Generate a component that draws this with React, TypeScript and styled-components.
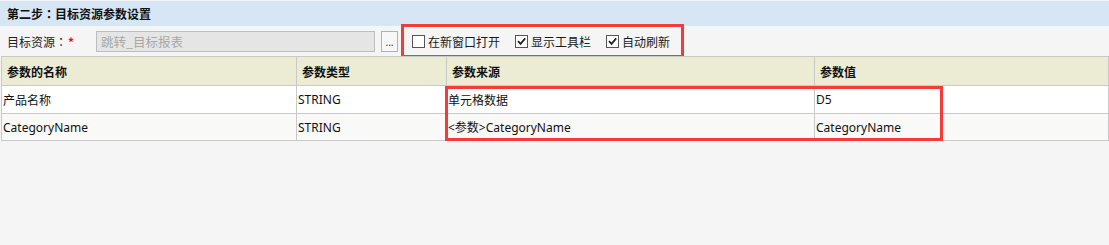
import React from "react";
import styled, { createGlobalStyle } from "styled-components";

const GlobalStyle = createGlobalStyle`
  html, body {
    margin: 0;
    padding: 0;
    background: #f5f5f5;
  }
  body {
    font-family: "Noto Sans", "Noto Sans CJK SC", sans-serif;
    font-size: 12px;
    color: #1a1a1a;
  }
`;

const Page = styled.div`
  width: 1109px;
  height: 245px;
  background: #f5f5f5;
  overflow: hidden;
  padding-top: 1px;
  box-sizing: border-box;
`;

const TitleBar = styled.div`
  height: 25px;
  background: #d6e6f5;
  display: flex;
  align-items: center;
  padding-left: 7px;
  font-weight: bold;
  font-family: "Noto Sans CJK SC", sans-serif;
  color: #111;
`;

const Colon = styled.span`
  font-family: "Noto Sans CJK TC", sans-serif;
`;

const FormRow = styled.div`
  height: 30px;
  display: flex;
  align-items: center;
  padding-left: 7px;
`;

const Label = styled.div`
  width: 89px;
  font-family: "Noto Sans CJK SC", sans-serif;
  color: #222;
  display: flex;
  align-items: center;
`;

const Required = styled.span`
  color: #ee1111;
  margin-left: 1px;
  font-weight: bold;
`;

const TextInput = styled.div`
  width: 279px;
  height: 21px;
  box-sizing: border-box;
  border: 1px solid #bdbdbd;
  background: #e5e5e5;
  color: #a8a8a8;
  padding-left: 4px;
  display: flex;
  align-items: center;
  font-family: "Noto Sans CJK SC", sans-serif;
  font-size: 12.5px;
`;

const BrowseButton = styled.div`
  margin-left: 6px;
  width: 17px;
  height: 21px;
  box-sizing: border-box;
  border: 1px solid #a9b3bd;
  background: #f7f7f7;
  display: flex;
  align-items: center;
  justify-content: center;
  font-size: 10px;
  color: #333;
  padding-top: 2px;
`;

const CheckGroup = styled.div`
  margin-left: 6px;
  width: 277px;
  height: 28px;
  box-sizing: border-box;
  outline: 3px solid #f53a3a;
  display: flex;
  align-items: center;
  padding-left: 8px;
  gap: 15px;
`;

const CheckItem = styled.label`
  display: flex;
  align-items: center;
  gap: 3px;
  font-family: "Noto Sans CJK SC", sans-serif;
  color: #1a1a1a;
`;

const Box = styled.span`
  width: 13px;
  height: 13px;
  box-sizing: border-box;
  border: 1px solid #555;
  background: #fff;
  display: flex;
  align-items: center;
  justify-content: center;
`;

const TableWrap = styled.div`
  position: relative;
  margin-left: 1px;
  width: 1108px;
`;

const Grid = styled.div`
  display: grid;
  grid-template-columns: 295px 150px 368px 293px;
  border: 1px solid #c9c9c9;
  border-bottom: none;
`;

const Cell = styled.div<{ $header?: boolean; $alt?: boolean; $last?: boolean; $h: number }>`
  height: ${(p) => p.$h}px;
  box-sizing: border-box;
  border-bottom: 1px solid #c9c9c9;
  border-right: ${(p) => (p.$last ? "none" : "1px solid #c9c9c9")};
  background: ${(p) => (p.$header ? "#ececd5" : p.$alt ? "#f9f9f7" : "#ffffff")};
  font-weight: ${(p) => (p.$header ? "bold" : "normal")};
  display: flex;
  align-items: ${(p) => (p.$header ? "flex-end" : "center")};
  padding: ${(p) => (p.$header ? "0 0 4px 5px" : "0 0 0 1px")};
  color: #111;
  white-space: nowrap;
`;

const Highlight = styled.div`
  position: absolute;
  left: 444px;
  top: 30px;
  width: 498px;
  height: 55px;
  box-sizing: border-box;
  border: 3px solid #f53a3a;
  pointer-events: none;
`;

const Check = ({ checked }: { checked: boolean }) => (
  <Box>
    {checked && (
      <svg width="11" height="11" viewBox="0 0 11 11">
        <path d="M2 5.2 L4.5 7.8 L9.2 2.4" fill="none" stroke="#222" strokeWidth="1.8" />
      </svg>
    )}
  </Box>
);

const headers = ["参数的名称", "参数类型", "参数来源", "参数值"];
const rows = [
  ["产品名称", "STRING", "单元格数据", "D5"],
  ["CategoryName", "STRING", "<参数>CategoryName", "CategoryName"],
];

export default function App() {
  return (
    <Page>
      <GlobalStyle />
      <TitleBar>
        第二步<Colon>：</Colon>目标资源参数设置
      </TitleBar>
      <FormRow>
        <Label>
          目标资源<Colon>：</Colon>
          <Required>*</Required>
        </Label>
        <TextInput>跳转_目标报表</TextInput>
        <BrowseButton>...</BrowseButton>
        <CheckGroup>
          <CheckItem>
            <Check checked={false} />
            在新窗口打开
          </CheckItem>
          <CheckItem>
            <Check checked />
            显示工具栏
          </CheckItem>
          <CheckItem>
            <Check checked />
            自动刷新
          </CheckItem>
        </CheckGroup>
      </FormRow>
      <TableWrap>
        <Grid>
          {headers.map((h, i) => (
            <Cell key={h} $header $h={29} $last={i === 3}>
              {h}
            </Cell>
          ))}
          {rows.map((r, ri) =>
            r.map((c, ci) => (
              <Cell key={`${ri}-${ci}`} $h={ri === 0 ? 28 : 27} $alt={ri === 1} $last={ci === 3}>
                {c}
              </Cell>
            ))
          )}
        </Grid>
        <Highlight />
      </TableWrap>
    </Page>
  );
}
